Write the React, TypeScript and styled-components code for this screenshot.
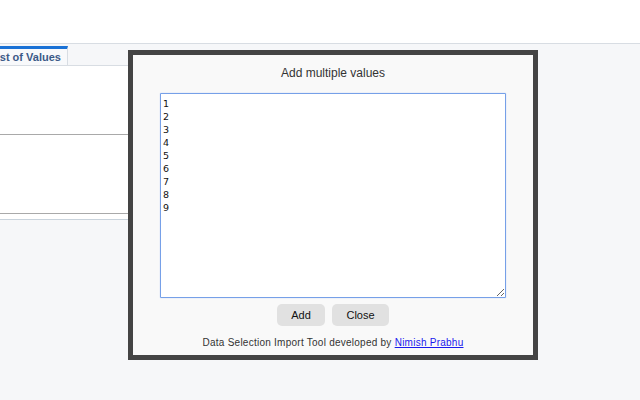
import React from "react";
import styled, { createGlobalStyle } from "styled-components";

const Global = createGlobalStyle`
  html, body { margin: 0; padding: 0; }
  body {
    background: #f6f7f9;
    font-family: "Liberation Sans", Arial, sans-serif;
    width: 640px;
    height: 400px;
    overflow: hidden;
  }
`;

const Page = styled.div`
  position: relative;
  width: 640px;
  height: 400px;
  overflow: hidden;
  background: #f6f7f9;
`;

const Header = styled.header`
  height: 43px;
  background: #ffffff;
  border-bottom: 1px solid #d8dde3;
`;

const Panel = styled.section`
  width: 320px;
  margin-top: 2px;
`;

const TabBar = styled.div`
  display: flex;
  height: 19px;
  border-bottom: 1px solid #d8dde3;
  margin-left: -20px;
`;

const Tab = styled.div`
  border-top: 3px solid #1a72d6;
  border-right: 1px solid #d8dde3;
  background: #f8f9fb;
  padding: 0 6px 0 10px;
  font-size: 11px;
  font-weight: bold;
  color: #3c5a88;
  line-height: 16px;
  display: flex;
  align-items: center;
`;

const PanelBody = styled.div`
  background: #ffffff;
  border-bottom: 1px solid #a9a9a9;
`;

const Section = styled.div<{ $h: number; $last?: boolean }>`
  height: ${(p) => p.$h}px;
  border-bottom: ${(p) => (p.$last ? "none" : "1px solid #a9a9a9")};
`;

const PanelFoot = styled.div`
  height: 5px;
  background: #ffffff;
  border-bottom: 1px solid #c9d3dc;
`;

const Modal = styled.div`
  position: absolute;
  left: 128px;
  top: 50px;
  width: 400px;
  height: 300px;
  border: 5px solid #444444;
  background: #f9f9f9;
  display: flex;
  flex-direction: column;
  align-items: center;
`;

const Title = styled.div`
  margin-top: 11px;
  font-size: 12px;
  line-height: 14px;
  color: #333333;
`;

const Area = styled.textarea`
  margin-top: 13px;
  box-sizing: border-box;
  width: 346px;
  height: 205px;
  border: 1px solid #76a0e8;
  box-shadow: 0 0 1px #8fb1ee;
  border-radius: 1px;
  padding: 3px 2px;
  font-family: "DejaVu Sans", Verdana, sans-serif;
  font-size: 9.5px;
  line-height: 13px;
  color: #111111;
  background: #ffffff;
  outline: none;
  resize: both;
`;

const Buttons = styled.div`
  margin-top: 6px;
  display: flex;
  gap: 7px;
`;

const Button = styled.button<{ $w: number }>`
  width: ${(p) => p.$w}px;
  height: 22px;
  border: none;
  border-radius: 5px;
  background: #e1e1e1;
  font-family: "Liberation Sans", Arial, sans-serif;
  font-size: 11px;
  color: #111111;
  padding: 0;
  cursor: pointer;
`;

const Footer = styled.div`
  margin-top: 11px;
  font-size: 10px;
  letter-spacing: 0.25px;
  color: #333333;
`;

const Link = styled.a`
  color: #1a1aee;
  text-decoration: underline;
`;

export default function App() {
  return (
    <Page>
      <Global />
      <Header />
      <Panel>
        <TabBar>
          <Tab>List of Values</Tab>
        </TabBar>
        <PanelBody>
          <Section $h={68} />
          <Section $h={78} $last />
        </PanelBody>
        <PanelFoot />
      </Panel>
      <Modal>
        <Title>Add multiple values</Title>
        <Area defaultValue={"1\n2\n3\n4\n5\n6\n7\n8\n9"} spellCheck={false} />
        <Buttons>
          <Button $w={48}>Add</Button>
          <Button $w={57}>Close</Button>
        </Buttons>
        <Footer>
          Data Selection Import Tool developed by <Link href="#">Nimish Prabhu</Link>
        </Footer>
      </Modal>
    </Page>
  );
}
